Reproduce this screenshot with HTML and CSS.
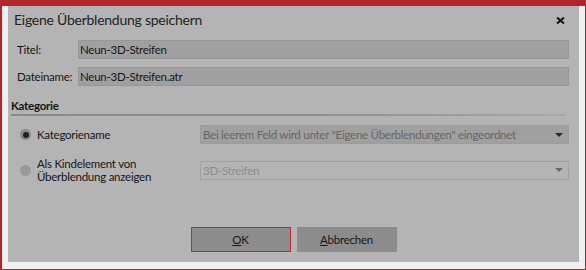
FILE: index.html
```html
<!DOCTYPE html>
<html lang="de">
<head>
<meta charset="utf-8">
<link rel="stylesheet" href="styles.css">
</head>
<body>
<div class="frame">
  <div class="dialog">
    <div class="titlebar">
      <span class="title">Eigene Überblendung speichern</span>
      <svg class="close" width="9" height="7" viewBox="0 0 9 7"><path d="M1 0.5 L8 6.5 M8 0.5 L1 6.5" stroke="#111" stroke-width="2"/></svg>
    </div>
    <div class="form">
      <div class="row">
        <span class="label">Titel:</span>
        <div class="input">Neun-3D-Streifen</div>
      </div>
      <div class="row">
        <span class="label">Dateiname:</span>
        <div class="input">Neun-3D-Streifen.atr</div>
      </div>
    </div>
    <div class="section">Kategorie</div>
    <div class="rule"></div>
    <div class="opt opt1">
      <span class="radio checked"></span>
      <span class="optlabel">Kategoriename</span>
      <div class="select sel1"><span>Bei leerem Feld wird unter "Eigene Überblendungen" eingeordnet</span><span class="arrow"></span></div>
    </div>
    <div class="opt opt2">
      <span class="radio"></span>
      <span class="optlabel two">Als Kindelement von<br>Überblendung anzeigen</span>
      <div class="select sel2"><span>3D-Streifen</span><span class="arrow"></span></div>
    </div>
    <div class="buttons">
      <div class="btn ok"><u>O</u>K</div>
      <div class="btn"><u>A</u>bbrechen</div>
    </div>
  </div>
</div>
</body>
</html>
```
FILE: styles.css
```css
html, body {
  margin: 0;
  padding: 0;
}
body {
  width: 586px;
  height: 270px;
  overflow: hidden;
  font-family: Lato, "Noto Sans", sans-serif;
  font-size: 11.5px;
  letter-spacing: -0.25px;
  color: #161616;
  white-space: nowrap;
}
.frame {
  box-sizing: border-box;
  width: 586px;
  height: 270px;
  background: #f0f0f0;
  border-top: 6px solid #b0282c;
  border-left: 2px solid #b0282c;
  border-right: 1px solid #b0282c;
  border-bottom: 1px solid #b0282c;
  padding: 0 6px 6px 6px;
}
.dialog {
  height: 256px;
  background: #b4b4b4;
  display: flex;
  flex-direction: column;
}
.titlebar {
  height: 27px;
  display: flex;
  align-items: center;
  justify-content: space-between;
  padding: 0 14px 0 6px;
}
.title {
  font-size: 14px;
  letter-spacing: -0.25px;
  color: #222;
}
.close {
  display: block;
  margin-top: 1px;
}
.form {
  padding: 7px 10px 0 9px;
  display: flex;
  flex-direction: column;
  gap: 8px;
}
.row {
  display: flex;
  align-items: center;
}
.label {
  width: 61px;
  flex: none;
}
.input {
  flex: 1;
  box-sizing: border-box;
  height: 19px;
  background: #a0a0a0;
  border: 1px solid #979797;
  padding-left: 1px;
  line-height: 17px;
}
.section {
  margin: 12px 0 0 3px;
  font-weight: bold;
  height: 16px;
  line-height: 16px;
}
.rule {
  margin: 0 13px 0 3px;
  height: 2px;
  background: linear-gradient(to right, #8a8a8a 0%, #8c8c8c 50%, #a8a8a8 100%);
}
.opt {
  display: flex;
  align-items: center;
  padding: 0 10px 0 12px;
}
.opt1 {
  margin-top: 9px;
  height: 19px;
}
.opt2 {
  margin-top: 13px;
  height: 26px;
}
.radio {
  box-sizing: border-box;
  width: 11px;
  height: 11px;
  border-radius: 50%;
  background: #999;
  flex: none;
  display: flex;
  align-items: center;
  justify-content: center;
}
.radio.checked {
  background: #8a8a8a;
}
.radio.checked::after {
  content: "";
  width: 6px;
  height: 6px;
  border-radius: 50%;
  background: #1e1e1e;
}
.optlabel {
  margin-left: 6px;
  width: 163px;
  flex: none;
}
.optlabel.two {
  line-height: 13px;
}
.select {
  flex: 1;
  box-sizing: border-box;
  display: flex;
  align-items: center;
  justify-content: space-between;
  padding: 0 5px 0 2px;
  border: 1px solid #9c9c9c;
}
.sel1 {
  height: 19px;
  background: #a0a0a0;
  color: #666;
}
.sel2 {
  height: 19px;
  background: #b4b4b4;
  border-color: #a2a2a2;
  color: #8c8c8c;
}
.arrow {
  width: 0;
  height: 0;
  border-left: 4px solid transparent;
  border-right: 4px solid transparent;
  border-top: 4px solid #2a2a2a;
}
.sel2 .arrow {
  border-top-color: #666;
}
.buttons {
  margin-top: 44px;
  display: flex;
  justify-content: center;
  gap: 6px;
}
.btn {
  box-sizing: border-box;
  width: 100px;
  height: 25px;
  background: #8c8c8c;
  border: 1px solid #8c8c8c;
  display: flex;
  align-items: center;
  justify-content: center;
  color: #161616;
}
.btn.ok {
  border: 1px solid #c8282d;
}
```
